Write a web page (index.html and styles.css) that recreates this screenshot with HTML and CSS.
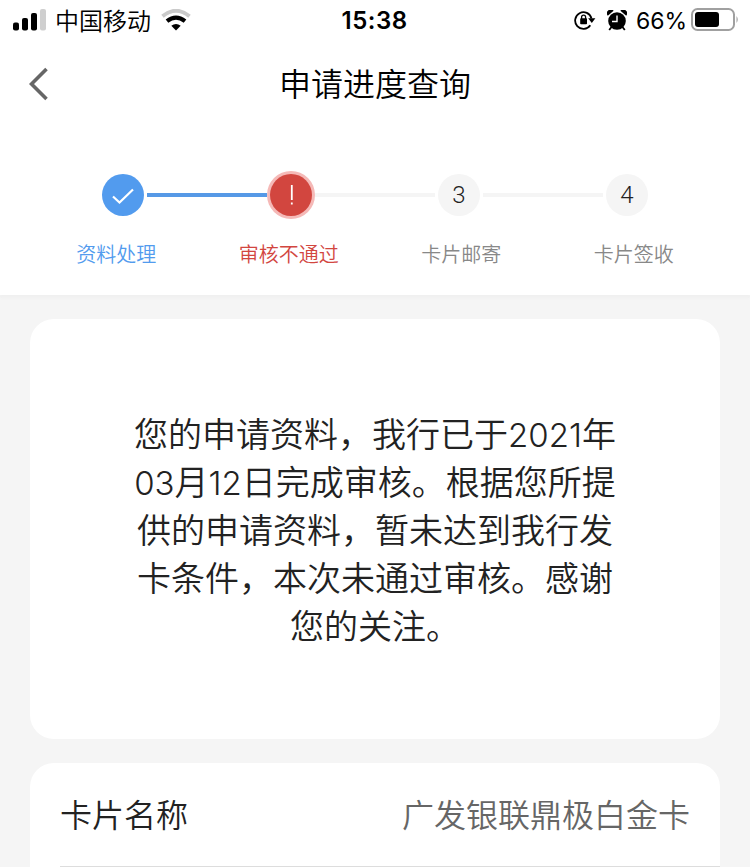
FILE: index.html
```
<!DOCTYPE html>
<html lang="zh-CN">
<head>
  <meta charset="UTF-8">
  <meta name="viewport" content="width=device-width, initial-scale=1.0">
  <title>申请进度查询</title>
  <link rel="stylesheet" href="styles.css">
</head>
<body>
  <header class="header">
    <div class="status-bar">
      <div class="status-left">
        <svg class="signal" width="34" height="22" viewBox="0 0 34 22">
          <rect x="0" y="13.500" width="6" height="8" rx="2"/>
          <rect x="9" y="9" width="6" height="12.500" rx="2"/>
          <rect x="18" y="4" width="6" height="17.500" rx="2"/>
          <rect x="27" y="0" width="6" height="21.500" rx="2" fill="#cfcfcf"/>
        </svg>
        <span class="carrier">中国移动</span>
        <svg class="wifi" width="30" height="22" viewBox="0 0 30 22" fill="none">
          <path d="M1.500 7.200Q15 -3.600 28.500 7.200" stroke="#cacaca" stroke-width="4"/>
          <path d="M6 12.200Q15 5 24 12.200" stroke="#000" stroke-width="4.200"/>
          <path d="M10.300 16.800Q15 13 19.700 16.800L15 21.500Z" fill="#000"/>
        </svg>
      </div>
      <span class="time">15:38</span>
      <div class="status-right">
        <svg class="lock" width="22" height="20" viewBox="0 0 22 20">
          <path d="M16.300 15.200A8.300 8.300 0 1 1 17.500 8.500" fill="none" stroke="#000" stroke-width="1.800"/>
          <path d="M14.200 8.200H21.400L17.800 13Z"/>
          <rect x="6.200" y="8.300" width="6.800" height="6" rx=".8"/>
          <path d="M7.600 9V7.200a2 2 0 0 1 4 0V9" fill="none" stroke="#000" stroke-width="1.300"/>
        </svg>
        <svg class="alarm" width="20" height="21" viewBox="0 0 20 21">
          <circle cx="10" cy="11" r="8.800"/>
          <path d="M.8 5.800A3.800 3.800 0 0 1 6.600 .8ZM19.200 5.800A3.800 3.800 0 0 0 13.400 .8Z"/>
          <path d="M4.500 17L2.200 20M15.500 17L17.800 20" stroke="#000" stroke-width="1.800"/>
          <path d="M10 5.500V11.500H5" fill="none" stroke="#fff" stroke-width="1.400"/>
        </svg>
        <span class="percent">66%</span>
        <svg class="battery" width="48" height="24" viewBox="0 0 48 24">
          <rect x="1" y="1" width="42" height="21" rx="5.500" fill="none" stroke="#a0a0a0" stroke-width="2"/>
          <rect x="4" y="4" width="24" height="15" rx="3"/>
          <path d="M45.500 8Q48 11.500 45.500 15Z" fill="#a0a0a0"/>
        </svg>
      </div>
    </div>

    <div class="nav-bar">
      <svg class="back" width="20" height="34" viewBox="0 0 20 34">
        <path d="M17.500 2L2.500 17L17.500 32" fill="none" stroke="#666" stroke-width="3.600"/>
      </svg>
      <h1>申请进度查询</h1>
    </div>

    <div class="steps">
      <div class="circle done">
        <svg width="42" height="42" viewBox="0 0 42 42">
          <path d="M11 22.500L17.500 28.500L31 15.500" fill="none" stroke="#fff" stroke-width="2.200"/>
        </svg>
      </div>
      <div class="line active"></div>
      <div class="circle failed">
        <svg width="42" height="42" viewBox="0 0 42 42">
          <path d="M21.800 11V26M21.800 28.600V30.600" stroke="#fff" stroke-width="1.800"/>
        </svg>
      </div>
      <div class="line"></div>
      <div class="circle">3</div>
      <div class="line"></div>
      <div class="circle">4</div>
    </div>
    <div class="labels">
      <span class="label-done">资料处理</span>
      <span class="label-failed">审核不通过</span>
      <span>卡片邮寄</span>
      <span>卡片签收</span>
    </div>
  </header>

  <main class="content">
    <section class="card message">
      <p>您的申请资料，我行已于<span class="num">2021</span>年<br><span class="num">03</span>月<span class="num">12</span>日完成审核。根据您所提<br>供的申请资料，暂未达到我行发<br>卡条件，本次未通过审核。感谢<br>您的关注。</p>
    </section>
    <section class="card details">
      <div class="row">
        <span class="row-name">卡片名称</span>
        <span class="row-value">广发银联鼎极白金卡</span>
      </div>
    </section>
  </main>
</body>
</html>
```
FILE: styles.css
```
* {
  box-sizing: border-box;
}

body {
  margin: 0;
  height: 867px;
  overflow: hidden;
  background-color: #f5f5f5;
  font-family: "Noto Sans CJK SC", sans-serif;
  font-weight: 350;
  color: #222;
}

.header {
  height: 295px;
  background-color: #fff;
  box-shadow: 0 3px 2px #f0f0f0;
}

.status-bar {
  display: grid;
  grid-template-columns: 1fr auto 1fr;
  align-items: center;
  height: 40px;
  padding: 0 11px 0 13px;
  color: #000;
}

.status-left,
.status-right {
  display: flex;
  align-items: center;
}

.status-right {
  justify-content: flex-end;
}

.carrier {
  margin: 0 10px 0 8px;
  font-size: 24px;
  line-height: 40px;
}

.time {
  margin-right: 3px;
  padding-top: 1px;
  font-family: Inter, sans-serif;
  font-size: 24px;
  font-weight: 600;
  letter-spacing: 0.5px;
}

.alarm {
  margin: 0 9px 0 11px;
}

.percent {
  margin-right: 4px;
  padding-top: 1px;
  font-family: Inter, sans-serif;
  font-size: 23px;
  font-weight: 400;
}

.nav-bar {
  display: grid;
  grid-template-columns: 20px 1fr 20px;
  align-items: center;
  height: 88px;
  padding: 0 29px;
}

h1 {
  margin: 0;
  padding-bottom: 4px;
  font-size: 32px;
  font-weight: 350;
  line-height: 48px;
  text-align: center;
  color: #000;
}

.steps {
  display: flex;
  align-items: center;
  justify-content: center;
  gap: 3px;
  height: 48px;
  margin-top: 43px;
}

.circle {
  flex: none;
  display: flex;
  align-items: center;
  justify-content: center;
  width: 42px;
  height: 42px;
  border-radius: 50%;
  background-color: #f5f5f5;
  font-family: Roboto, sans-serif;
  font-size: 24px;
  font-weight: 300;
}

.done {
  background-color: #529bee;
}

.failed {
  background-color: #d2463f;
  box-shadow: 0 0 0 3px #f5b9b7;
}

.line {
  width: 120px;
  height: 4px;
  background-color: #f5f5f5;
}

.line.active {
  background-color: #5699e6;
}

.labels {
  display: grid;
  grid-template-columns: repeat(4, 1fr);
  margin: 20px 30px 0;
  font-size: 20px;
  line-height: 30px;
  text-align: center;
  color: #888;
}

.label-done {
  color: #529bee;
}

.label-failed {
  color: #d2463f;
}

.content {
  padding: 24px 30px 0;
}

.card {
  border-radius: 24px;
  background-color: #fff;
}

.message {
  display: flex;
  align-items: center;
  justify-content: center;
  height: 420px;
}

.message p {
  margin: 0;
  padding-bottom: 1px;
  font-size: 34px;
  line-height: 48px;
  text-align: center;
  white-space: nowrap;
}

.num {
  font-family: Inter, sans-serif;
  font-size: 33px;
  font-weight: 350;
  line-height: 1;
}

.details {
  height: 128px;
  margin-top: 24px;
  padding-left: 30px;
}

.row {
  display: flex;
  align-items: center;
  justify-content: space-between;
  height: 104px;
  padding: 0 30px 3px 0;
  border-bottom: 1px solid #ddd;
  font-size: 32px;
}

.row-value {
  color: #666;
}
```
